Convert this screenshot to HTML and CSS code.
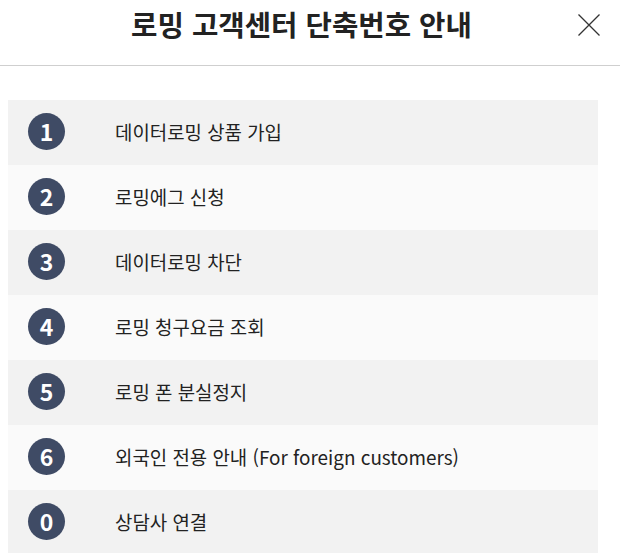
FILE: index.html
```html
<!DOCTYPE html>
<html lang="ko">
<head>
<meta charset="utf-8">
<link rel="stylesheet" href="styles.css">
</head>
<body>
<div class="header">
  <h1 class="title">로밍 고객센터 단축번호 안내</h1>
  <button class="close" aria-label="닫기">
    <svg width="22" height="22" viewBox="0 0 22 22"><path d="M0.5 0.5 L21.5 21.5 M21.5 0.5 L0.5 21.5" stroke="#333" stroke-width="1.3" fill="none"/></svg>
  </button>
</div>
<ul class="list">
  <li class="row dark"><span class="num">1</span><span class="label">데이터로밍 상품 가입</span></li>
  <li class="row light"><span class="num">2</span><span class="label">로밍에그 신청</span></li>
  <li class="row dark"><span class="num">3</span><span class="label">데이터로밍 차단</span></li>
  <li class="row light"><span class="num">4</span><span class="label">로밍 청구요금 조회</span></li>
  <li class="row dark"><span class="num">5</span><span class="label">로밍 폰 분실정지</span></li>
  <li class="row light"><span class="num">6</span><span class="label">외국인 전용 안내 (For foreign customers)</span></li>
  <li class="row dark"><span class="num">0</span><span class="label">상담사 연결</span></li>
</ul>
</body>
</html>
```
FILE: styles.css
```css
html, body {
  margin: 0;
  padding: 0;
  background: #fff;
  font-family: "Noto Sans CJK KR", "Noto Sans", sans-serif;
  color: #222;
}
.header {
  position: relative;
  height: 65px;
  border-bottom: 1px solid #cfcfcf;
  display: flex;
  align-items: center;
  justify-content: center;
  padding-right: 17px;
}
.title {
  margin: 0;
  font-size: 28.7px;
  font-weight: 700;
  color: #222;
  line-height: 1;
  letter-spacing: 0;
  transform: translateY(-8px);
}
.close {
  position: absolute;
  left: 578px;
  top: 14px;
  width: 22px;
  height: 22px;
  padding: 0;
  border: 0;
  background: none;
  display: block;
}
.close svg { display: block; }
.list {
  list-style: none;
  margin: 34px 22px 0 8px;
  padding: 0;
}
.row {
  height: 65px;
  display: flex;
  align-items: center;
  padding-left: 20px;
}
.row.dark { background: #f2f2f2; }
.row.light { background: #fafafa; }
.num {
  width: 37px;
  height: 37px;
  border-radius: 50%;
  background: #3f4b65;
  color: #fff;
  font-weight: 700;
  font-size: 23px;
  display: flex;
  align-items: center;
  justify-content: center;
  line-height: 1;
  margin-right: 50px;
  margin-top: -2px;
}
.label {
  font-size: 18.9px;
  color: #222;
  line-height: 1;
}
```
